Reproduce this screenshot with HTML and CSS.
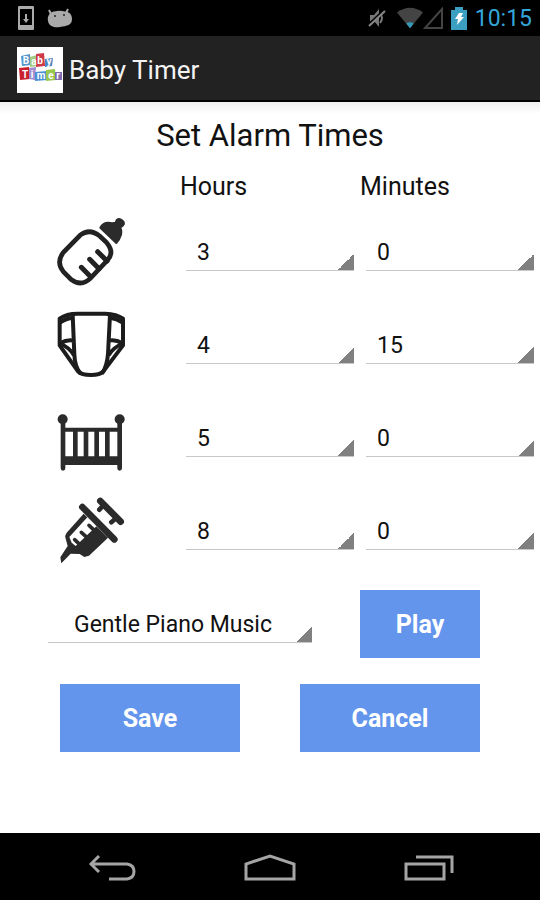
FILE: index.html
```
<!doctype html>
<html lang="en">
  <head>
    <title>Baby Timer</title>
    <meta name="viewport" content="width=device-width,initial-scale=1.0"/>
    <meta charset="utf-8"/>
    <link rel="stylesheet" href="styles.css">
  </head>
  <body>
    <div class="status">
      <svg width="16" height="24" viewBox="0 0 16 24"><path fill="#aaa" fill-rule="evenodd" d="M0 1q0-1 1-1h14q1 0 1 1v22q0 1-1 1H1q-1 0-1-1zM2 3v16h12V3z"/><path fill="#aaa" d="M7 8h2v5h2l-3 4-3-4h2z"/></svg>
      <svg class="droid" width="26" height="20" viewBox="0 0 26 20"><path fill="#aaa" d="M1 13C0 8 3 4 7 3.500Q13 2 18 3.500C23 4 25 7 25 11C25 17 20 18 13 19C6 20 2 18 1 13z"/><path stroke="#aaa" stroke-width="2" d="M4 6L2 2M19 5L21 1"/><circle cx="8" cy="8" r="1" fill="#222"/><circle cx="17" cy="7" r="1" fill="#222"/></svg>
      <span class="fill"></span>
      <svg width="18" height="20" viewBox="0 0 18 20"><path fill="#777" d="M2 7h4l5-6v18l-5-6H2z"/><path fill="none" stroke="#777" stroke-width="2" d="M12 5q4 5 0 10"/><path stroke="#000" stroke-width="2" d="M1 16L17 1"/><path stroke="#888" stroke-width="2" d="M1 18L17 3"/></svg>
      <svg class="wifi" width="26" height="22" viewBox="0 0 28 22"><path fill="#444" d="M0 5Q14-5 28 5L14 22z"/><path fill="#3498b8" d="M10 17q4-3 8 0l-4 5z"/></svg>
      <svg width="20" height="22" viewBox="0 0 20 22"><path fill="none" stroke="#444" stroke-width="2" d="M2 21H19V2z"/></svg>
      <svg class="battery" width="16" height="23" viewBox="0 0 16 23"><path fill="#3b9fc2" d="M0 3h4V0h8v3h4v20H0z"/><path fill="#fff" d="M8 6h4l-2 4h3l-7 8 1-6H4z"/></svg>
      <span class="clock">10:15</span>
    </div>
    <header class="bar">
      <svg class="logo" width="46" height="46" viewBox="0 0 46 46">
        <path fill="#fff" d="M0 0h46v46H0z"/>
        <path fill="#5595ca" d="M4 9l9-2 1 11-9 1z"/>
        <path fill="#a5cb80" d="M13 10l7-2 1 11-8 1z"/>
        <path fill="#cf3947" d="M19 7l8-1 1 13-9 1z"/>
        <path fill="#4c87bf" d="M28 12l8-1-1 8-7 1z"/>
        <path fill="#c9222d" d="M2 21l10-1 1 12-10 1z"/>
        <path fill="#a28bd0" d="M12 21l7-1-1 13-6-1z"/>
        <path fill="#4c91d1" d="M18 25l12-1v9l-12 1z"/>
        <path fill="#98c84c" d="M29 23l9-1 1 11-10 1z"/>
        <path fill="#806dae" d="M38 25h7v8h-7z"/>
        <g fill="#fff" font-size="10" font-weight="700" text-anchor="middle"><text x="9" y="17">B</text><text x="17" y="18">a</text><text x="23" y="17">b</text><text x="32" y="18">y</text><text x="8" y="31">T</text><text x="15" y="31">i</text><text x="24" y="32">m</text><text x="34" y="32">e</text><text x="41" y="32">r</text></g>
      </svg>
      <h1>Baby Timer</h1>
    </header>
    <main>
      <h2>Set Alarm Times</h2>
      <form class="times" onsubmit="return false">
        <span></span>
        <span class="head" id="hours">Hours</span>
        <span class="head" id="minutes">Minutes</span>

        <svg class="icon" id="feed" role="img" aria-label="Feeding" width="100" height="90" viewBox="0 0 300 270">
          <path fill="#fff" stroke="#222" stroke-width="14" d="M121 84Q149 63 179 87L200 107Q224 135 203 159L151 214Q124 240 94 218L70 194Q47 165 71 135z"/>
          <path stroke="#222" stroke-width="15" stroke-linecap="round" d="M124 181l28 28M149 157l28 28M173 134l28 28"/>
          <path fill="#2b2b2b" stroke="#2b2b2b" stroke-width="6" stroke-linejoin="round" d="M181 62Q188 47 205 47Q217 50 227 47L230 39Q238 33 246 40Q256 48 249 55L241 61Q247 77 241 88Q238 100 229 108z"/>
        </svg>
        <select aria-labelledby="feed hours"><option>3</option></select>
        <select aria-labelledby="feed minutes"><option>0</option></select>

        <svg class="icon" id="diaper" role="img" aria-label="Diaper" width="100" height="90" viewBox="0 0 300 270">
          <g fill="none" stroke="#1c1c1c" stroke-width="12" stroke-linejoin="round"><path d="M59 56Q80 41 112 41H196Q230 42 249 56V136L190 214Q180 225 153 225Q124 225 114 214L59 136z"/><path d="M98 44L103 162Q104 200 122 221M210 44L204 162Q201 200 186 221M60 68Q78 55 99 53M248 68Q230 55 210 53M60 130Q81 118 101 122M248 130Q226 118 207 122M62 132Q88 142 102 166M246 132Q220 142 206 166"/></g>
        </svg>
        <select aria-labelledby="diaper hours"><option>4</option></select>
        <select aria-labelledby="diaper minutes"><option>15</option></select>

        <svg class="icon" id="sleep" role="img" aria-label="Sleep" width="100" height="90" viewBox="0 0 300 270">
          <g fill="#2b2b2b"><circle cx="68" cy="79" r="15"/><circle cx="239" cy="79" r="15"/><path d="M66 104h176v12H66zM69 190h170v26H69z"/></g>
          <path stroke="#2b2b2b" stroke-width="14" stroke-linecap="round" d="M69 78v148M239 78v148"/>
          <path stroke="#2b2b2b" stroke-width="14" d="M106 106v90M138 106v90M170 106v90M202 106v90"/>
        </svg>
        <select aria-labelledby="sleep hours"><option>5</option></select>
        <select aria-labelledby="sleep minutes"><option>0</option></select>

        <svg class="icon" id="medicine" role="img" aria-label="Medicine" width="100" height="90" viewBox="0 0 300 270">
          <path fill="#2b2b2b" d="M131 83L80 140Q73 149 77 158L83 180L61 214L64 232L92 203L119 204L133 213L147 209L204 155z"/>
          <path fill="#fff" d="M142 94L170 120L107 180L95 170L88 153z"/>
          <path stroke="#2b2b2b" stroke-width="11" stroke-linecap="round" d="M166 136L147 118M144 157L124 139M122 178L104 161"/>
          <path stroke="#2b2b2b" stroke-width="20" stroke-linecap="round" d="M127 63L223 160M181 45L242 107"/>
          <path stroke="#2b2b2b" stroke-width="14" stroke-linecap="round" d="M190 58L178 71M228 97L214 109"/>
        </svg>
        <select aria-labelledby="medicine hours"><option>8</option></select>
        <select aria-labelledby="medicine minutes"><option>0</option></select>
      </form>
      <div class="actions">
        <select class="sound" aria-label="Alarm sound"><option>Gentle Piano Music</option></select>
        <button class="play">Play</button>
        <button class="save">Save</button>
        <button class="cancel">Cancel</button>
      </div>
    </main>
    <nav>
      <button aria-label="Back"><svg width="48" height="28" viewBox="0 0 48 28"><path fill="none" stroke="#a5a5a5" stroke-width="3" d="M11 2L3 10L11 18M3 10H39Q46 11 46 17.500Q46 24 39 25H21"/></svg></button>
      <button aria-label="Home"><svg width="52" height="28" viewBox="0 0 52 28"><path fill="none" stroke="#a5a5a5" stroke-width="3" d="M2 25V10L26 2L50 10V25z"/></svg></button>
      <button aria-label="Recent apps"><svg width="50" height="28" viewBox="0 0 50 28"><path fill="none" stroke="#a5a5a5" stroke-width="3" d="M2 10H40V25H2zM12 3H48V19"/></svg></button>
    </nav>
  </body>
</html>
```
FILE: styles.css
```
*{
  box-sizing:border-box;
  font-family:Roboto,sans-serif;
}
body{
  display:flex;
  flex-direction:column;
  min-height:100vh;
  margin:0;
  background:#fff;
  color:#111;
}
h1,h2{
  margin:0;
  font-weight:400;
}
svg{
  display:block;
}
.status{
  display:flex;
  align-items:center;
  height:36px;
  padding:0 8px 0 18px;
  background:#000;
}
.droid{
  margin-left:13px;
}
.fill{
  flex:1;
}
.wifi{
  margin-left:11px;
}
.battery{
  margin:0 8px;
}
.clock{
  color:#33a5d8;
  font-size:23px;
}
.bar{
  display:flex;
  align-items:center;
  gap:6px;
  height:66px;
  padding:3px 17px 0;
  background:#222;
  border-bottom:2px solid #000;
  color:#f3f3f3;
}
h1{
  font-size:26px;
}
main{
  flex:1;
  background:linear-gradient(#eee,#fff 12px);
}
h2{
  padding-top:14px;
  font-size:31px;
  line-height:40px;
  text-align:center;
}
.times{
  display:grid;
  grid-template-columns:repeat(3,1fr);
  grid-template-rows:49px;
  grid-auto-rows:93px;
  align-items:center;
}
.head{
  padding-top:12px;
  font-size:25px;
}
.icon{
  justify-self:center;
}
select{
  appearance:none;
  height:38px;
  margin:0 6px;
  padding:2px 11px 0;
  border:0;
  border-bottom:1px solid #c8c8c8;
  border-radius:0;
  background:linear-gradient(135deg,transparent 50%,#808080 50%) right bottom/17px 17px no-repeat border-box;
  color:#111;
  font-size:23px;
}
.actions{
  display:grid;
  grid-template-columns:repeat(9,1fr);
  row-gap:26px;
  align-items:center;
  padding-top:13px;
}
.sound{
  grid-column:1/7;
  margin:0 48px;
  padding:2px 26px 0;
}
.actions button{
  height:68px;
  border:0;
  background:#6495ed;
  color:#fff;
  font-size:25px;
  font-weight:700;
}
.play{
  grid-column:7/9;
}
.actions .save{
  grid-column:2/5;
}
.actions .cancel{
  grid-column:6/9;
}
nav{
  display:flex;
  justify-content:center;
  gap:108px;
  height:67px;
  padding:2px 0 0 1px;
  background:#000;
}
nav button{
  padding:0;
  border:0;
  background:none;
}
```
